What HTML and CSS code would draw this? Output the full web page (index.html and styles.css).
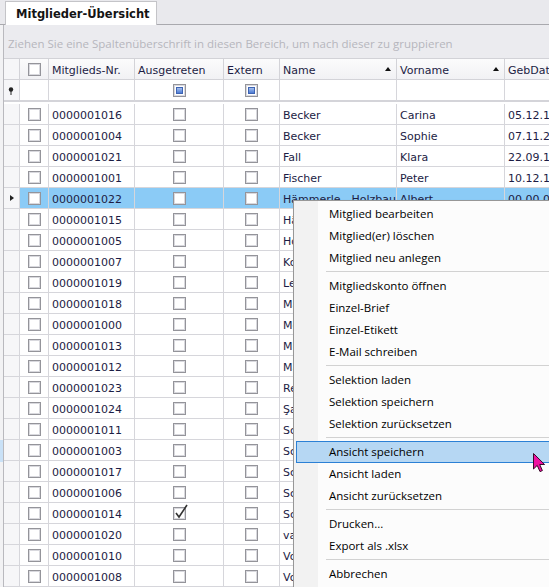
FILE: index.html
```html
<!DOCTYPE html>
<html lang="de">
<head>
    <meta charset="UTF-8">
    <title>Mitglieder-Übersicht</title>
    <link rel="stylesheet" href="styles.css">
</head>
<body>
    <div class="tabstrip">
        <div class="tab">Mitglieder-Übersicht</div>
    </div>
    <div class="content">
        <div class="behind">
            <div class="behind-sel"></div>
        </div>
        <div class="pane">
            <div class="group-panel">Ziehen Sie eine Spaltenüberschrift in diesen Bereich, um nach dieser zu gruppieren</div>
            <div class="grid">
                <div class="row head">
                    <div class="cell ind"></div>
                    <div class="cell box"><span class="cb"></span></div>
                    <div class="cell">Mitglieds-Nr.</div>
                    <div class="cell">Ausgetreten</div>
                    <div class="cell">Extern</div>
                    <div class="cell sort">Name<span class="arrow"></span></div>
                    <div class="cell sort">Vorname<span class="arrow"></span></div>
                    <div class="cell">GebDatum</div>
                </div>
                <div class="row filter">
                    <div class="cell ind">
                        <svg class="pin" width="6" height="8" viewBox="0 0 6 8"><circle cx="3" cy="2.5" r="2.2" fill="#222"/><rect x="2.5" y="4" width="1" height="4" fill="#222"/></svg>
                    </div>
                    <div class="cell box"></div>
                    <div class="cell"></div>
                    <div class="cell box"><span class="cb mixed"></span></div>
                    <div class="cell box"><span class="cb mixed"></span></div>
                    <div class="cell"></div>
                    <div class="cell"></div>
                    <div class="cell"></div>
                </div>
                <div class="gap"></div>

                <div class="row">
                    <div class="cell ind"></div><div class="cell box"><span class="cb"></span></div>
                    <div class="cell">0000001016</div><div class="cell box"><span class="cb"></span></div><div class="cell box"><span class="cb"></span></div>
                    <div class="cell">Becker</div><div class="cell">Carina</div><div class="cell">05.12.1987</div>
                </div>
                <div class="row">
                    <div class="cell ind"></div><div class="cell box"><span class="cb"></span></div>
                    <div class="cell">0000001004</div><div class="cell box"><span class="cb"></span></div><div class="cell box"><span class="cb"></span></div>
                    <div class="cell">Becker</div><div class="cell">Sophie</div><div class="cell">07.11.2001</div>
                </div>
                <div class="row">
                    <div class="cell ind"></div><div class="cell box"><span class="cb"></span></div>
                    <div class="cell">0000001021</div><div class="cell box"><span class="cb"></span></div><div class="cell box"><span class="cb"></span></div>
                    <div class="cell">Fall</div><div class="cell">Klara</div><div class="cell">22.09.1979</div>
                </div>
                <div class="row">
                    <div class="cell ind"></div><div class="cell box"><span class="cb"></span></div>
                    <div class="cell">0000001001</div><div class="cell box"><span class="cb"></span></div><div class="cell box"><span class="cb"></span></div>
                    <div class="cell">Fischer</div><div class="cell">Peter</div><div class="cell">10.12.1965</div>
                </div>
                <div class="row selected">
                    <div class="cell ind"><span class="current"></span></div><div class="cell box"><span class="cb"></span></div>
                    <div class="cell">0000001022</div><div class="cell box"><span class="cb"></span></div><div class="cell box"><span class="cb"></span></div>
                    <div class="cell">Hämmerle - Holzbau</div><div class="cell">Albert</div><div class="cell">00.00.0000</div>
                </div>
                <div class="row">
                    <div class="cell ind"></div><div class="cell box"><span class="cb"></span></div>
                    <div class="cell">0000001015</div><div class="cell box"><span class="cb"></span></div><div class="cell box"><span class="cb"></span></div>
                    <div class="cell">Hämmerle</div><div class="cell">Anna</div><div class="cell">14.03.1990</div>
                </div>
                <div class="row">
                    <div class="cell ind"></div><div class="cell box"><span class="cb"></span></div>
                    <div class="cell">0000001005</div><div class="cell box"><span class="cb"></span></div><div class="cell box"><span class="cb"></span></div>
                    <div class="cell">Hofer</div><div class="cell">Thomas</div><div class="cell">02.06.1972</div>
                </div>
                <div class="row">
                    <div class="cell ind"></div><div class="cell box"><span class="cb"></span></div>
                    <div class="cell">0000001007</div><div class="cell box"><span class="cb"></span></div><div class="cell box"><span class="cb"></span></div>
                    <div class="cell">Koch</div><div class="cell">Julia</div><div class="cell">19.01.1984</div>
                </div>
                <div class="row">
                    <div class="cell ind"></div><div class="cell box"><span class="cb"></span></div>
                    <div class="cell">0000001019</div><div class="cell box"><span class="cb"></span></div><div class="cell box"><span class="cb"></span></div>
                    <div class="cell">Lehmann</div><div class="cell">Martin</div><div class="cell">28.08.1969</div>
                </div>
                <div class="row">
                    <div class="cell ind"></div><div class="cell box"><span class="cb"></span></div>
                    <div class="cell">0000001018</div><div class="cell box"><span class="cb"></span></div><div class="cell box"><span class="cb"></span></div>
                    <div class="cell">Maier</div><div class="cell">Stefan</div><div class="cell">11.04.1977</div>
                </div>
                <div class="row">
                    <div class="cell ind"></div><div class="cell box"><span class="cb"></span></div>
                    <div class="cell">0000001000</div><div class="cell box"><span class="cb"></span></div><div class="cell box"><span class="cb"></span></div>
                    <div class="cell">Meier</div><div class="cell">Hans</div><div class="cell">03.02.1958</div>
                </div>
                <div class="row">
                    <div class="cell ind"></div><div class="cell box"><span class="cb"></span></div>
                    <div class="cell">0000001013</div><div class="cell box"><span class="cb"></span></div><div class="cell box"><span class="cb"></span></div>
                    <div class="cell">Müller</div><div class="cell">Lisa</div><div class="cell">25.10.1993</div>
                </div>
                <div class="row">
                    <div class="cell ind"></div><div class="cell box"><span class="cb"></span></div>
                    <div class="cell">0000001012</div><div class="cell box"><span class="cb"></span></div><div class="cell box"><span class="cb"></span></div>
                    <div class="cell">Mayer</div><div class="cell">Karl</div><div class="cell">09.07.1961</div>
                </div>
                <div class="row">
                    <div class="cell ind"></div><div class="cell box"><span class="cb"></span></div>
                    <div class="cell">0000001023</div><div class="cell box"><span class="cb"></span></div><div class="cell box"><span class="cb"></span></div>
                    <div class="cell">Reiter</div><div class="cell">Eva</div><div class="cell">16.05.1988</div>
                </div>
                <div class="row">
                    <div class="cell ind"></div><div class="cell box"><span class="cb"></span></div>
                    <div class="cell">0000001024</div><div class="cell box"><span class="cb"></span></div><div class="cell box"><span class="cb"></span></div>
                    <div class="cell">Şahin</div><div class="cell">Murat</div><div class="cell">30.11.1982</div>
                </div>
                <div class="row">
                    <div class="cell ind"></div><div class="cell box"><span class="cb"></span></div>
                    <div class="cell">0000001011</div><div class="cell box"><span class="cb"></span></div><div class="cell box"><span class="cb"></span></div>
                    <div class="cell">Schmid</div><div class="cell">Paul</div><div class="cell">21.03.1975</div>
                </div>
                <div class="row">
                    <div class="cell ind"></div><div class="cell box"><span class="cb"></span></div>
                    <div class="cell">0000001003</div><div class="cell box"><span class="cb"></span></div><div class="cell box"><span class="cb"></span></div>
                    <div class="cell">Schneider</div><div class="cell">Maria</div><div class="cell">08.09.1970</div>
                </div>
                <div class="row">
                    <div class="cell ind"></div><div class="cell box"><span class="cb"></span></div>
                    <div class="cell">0000001017</div><div class="cell box"><span class="cb"></span></div><div class="cell box"><span class="cb"></span></div>
                    <div class="cell">Schulz</div><div class="cell">Jonas</div><div class="cell">12.12.1995</div>
                </div>
                <div class="row">
                    <div class="cell ind"></div><div class="cell box"><span class="cb"></span></div>
                    <div class="cell">0000001006</div><div class="cell box"><span class="cb"></span></div><div class="cell box"><span class="cb"></span></div>
                    <div class="cell">Schwarz</div><div class="cell">Laura</div><div class="cell">04.06.1986</div>
                </div>
                <div class="row">
                    <div class="cell ind"></div><div class="cell box"><span class="cb"></span></div>
                    <div class="cell">0000001014</div>
                    <div class="cell box"><span class="cb checked"><svg width="16" height="16" viewBox="0 0 16 16"><path d="M3 9 L6 13 L14 1" fill="none" stroke="#333" stroke-width="1.6"/></svg></span></div>
                    <div class="cell box"><span class="cb"></span></div>
                    <div class="cell">Schäfer</div><div class="cell">Klaus</div><div class="cell">17.02.1954</div>
                </div>
                <div class="row">
                    <div class="cell ind"></div><div class="cell box"><span class="cb"></span></div>
                    <div class="cell">0000001020</div><div class="cell box"><span class="cb"></span></div><div class="cell box"><span class="cb"></span></div>
                    <div class="cell">van Dijk</div><div class="cell">Sanne</div><div class="cell">23.08.1991</div>
                </div>
                <div class="row">
                    <div class="cell ind"></div><div class="cell box"><span class="cb"></span></div>
                    <div class="cell">0000001010</div><div class="cell box"><span class="cb"></span></div><div class="cell box"><span class="cb"></span></div>
                    <div class="cell">Vogel</div><div class="cell">Lukas</div><div class="cell">06.04.1980</div>
                </div>
                <div class="row">
                    <div class="cell ind"></div><div class="cell box"><span class="cb"></span></div>
                    <div class="cell">0000001008</div><div class="cell box"><span class="cb"></span></div><div class="cell box"><span class="cb"></span></div>
                    <div class="cell">Vollmer</div><div class="cell">Petra</div><div class="cell">15.01.1968</div>
                </div>
            </div>
        </div>
    </div>

    <div class="menu">
        <div class="menu-item">Mitglied bearbeiten</div>
        <div class="menu-item">Mitglied(er) löschen</div>
        <div class="menu-item">Mitglied neu anlegen</div>
        <div class="menu-sep"></div>
        <div class="menu-item">Mitgliedskonto öffnen</div>
        <div class="menu-item">Einzel-Brief</div>
        <div class="menu-item">Einzel-Etikett</div>
        <div class="menu-item">E-Mail schreiben</div>
        <div class="menu-sep"></div>
        <div class="menu-item">Selektion laden</div>
        <div class="menu-item">Selektion speichern</div>
        <div class="menu-item">Selektion zurücksetzen</div>
        <div class="menu-sep"></div>
        <div class="menu-item active">Ansicht speichern</div>
        <div class="menu-item">Ansicht laden</div>
        <div class="menu-item">Ansicht zurücksetzen</div>
        <div class="menu-sep"></div>
        <div class="menu-item">Drucken...</div>
        <div class="menu-item">Export als .xlsx</div>
        <div class="menu-sep"></div>
        <div class="menu-item">Abbrechen</div>
    </div>

    <svg class="cursor" width="14" height="21" viewBox="0 0 14 21">
        <path d="M0.5 0.5 L0.5 16 L4.2 12.4 L7 18.6 L9.4 17.6 L6.7 11.5 L11.6 11.5 Z" fill="#ee10a0" stroke="#3a0a2a" stroke-width="1"/>
    </svg>
</body>
</html>
```

FILE: styles.css
```css
body {
    margin: 0;
    width: 549px;
    height: 587px;
    overflow: hidden;
    position: relative;
    background: #e9e9ed;
    font-family: "DejaVu Sans", sans-serif;
    font-size: 11px;
    color: #1c1c44;
}
.tabstrip {
    height: 24px;
    border-bottom: 1px solid #a9a9ae;
    padding-left: 5px;
    display: flex;
    align-items: flex-end;
}
.tab {
    width: 152px;
    height: 24px;
    margin-bottom: -1px;
    box-sizing: border-box;
    padding: 1px 0 0 10px;
    background: #fff;
    border: 1px solid #c4c4c8;
    border-bottom: none;
    font-weight: bold;
    font-size: 11.5px;
    line-height: 22px;
    color: #141414;
}
.content {
    display: flex;
    height: 562px;
}
.behind {
    width: 3px;
    background: #f2f2f4;
}
.behind-sel {
    margin-top: 415px;
    height: 22px;
    background: #c9e1f7;
}
.pane {
    flex: 1;
    border-left: 1px solid #b9b9be;
    background: #fff;
    overflow: hidden;
}
.group-panel {
    height: 34px;
    box-sizing: border-box;
    padding: 9px 0 0 4px;
    line-height: 20px;
    background: #ebebef;
    border-bottom: 1px solid #d2d2d7;
    font-family: "Open Sans", sans-serif;
    font-size: 11.5px;
    color: #b6b6bd;
    white-space: nowrap;
}
.row {
    display: grid;
    grid-template-columns: 16px 29px 86px 89px 56px 117px 108px 100px;
    height: 21px;
}
.cell {
    box-sizing: border-box;
    border-right: 1px solid #d6d6db;
    border-bottom: 1px solid #d6d6db;
    padding: 2px 3px 0;
    line-height: 19px;
    white-space: nowrap;
    overflow: hidden;
}
.head .cell {
    background: linear-gradient(#fbfbfc, #f1f1f4);
    border-color: #d3d3d8;
}
.filter {
    height: 22px;
}
.filter .cell {
    border-bottom-width: 2px;
    border-bottom-color: #d4d4d9;
}
.gap {
    height: 2px;
}
.cell.ind {
    padding: 0;
    background: #f6f6f8;
    display: flex;
    align-items: center;
    justify-content: center;
}
.cell.box {
    padding: 0;
    display: flex;
    align-items: center;
    justify-content: center;
}
.sort {
    display: flex;
    align-items: center;
    justify-content: space-between;
    padding-right: 5px;
}
.arrow {
    width: 0;
    height: 0;
    border-left: 3.5px solid transparent;
    border-right: 3.5px solid transparent;
    border-bottom: 4px solid #111;
    margin-top: -2px;
}
.pin {
    display: block;
    margin: 1px 2px 0 0;
}
.current {
    width: 0;
    height: 0;
    border-top: 3.5px solid transparent;
    border-bottom: 3.5px solid transparent;
    border-left: 4px solid #222;
    margin-left: 1px;
}
.selected .cell {
    background: #8bcbf6;
}
.selected .cell.ind {
    background: #f6f6f8;
}
.cb {
    position: relative;
    display: inline-block;
    width: 13px;
    height: 13px;
    box-sizing: border-box;
    border: 1px solid #94949a;
    background: #fff;
    box-shadow: inset 0 0 0 1px #d9d9de;
}
.cb.mixed::after {
    content: "";
    position: absolute;
    left: 2px;
    top: 2px;
    width: 7px;
    height: 7px;
    box-sizing: border-box;
    border: 1px solid #3d63b3;
    background: linear-gradient(#a5c0ee, #4d7bd3);
}
.cb.checked svg {
    position: absolute;
    left: -1px;
    top: -4px;
}
.menu {
    position: absolute;
    left: 293px;
    top: 200px;
    width: 280px;
    padding: 2px 0;
    background: linear-gradient(to right, #f2f2f2 24px, #fcfcfc 24px);
    border: 1px solid #979797;
    box-shadow: 2px 2px 3px rgba(0, 0, 0, 0.2);
    font-family: "Open Sans", sans-serif;
    font-size: 11.5px;
    color: #000;
}
.menu-item {
    height: 22px;
    box-sizing: border-box;
    margin: 0 2px;
    padding-left: 32px;
    border: 1px solid transparent;
    line-height: 20px;
    white-space: nowrap;
}
.menu-item.active {
    background: #b6d7f3;
    border-color: #2b80d5;
}
.menu-sep {
    height: 1px;
    margin: 2px 0 3px 32px;
    background: #d2d2d2;
}
.cursor {
    position: absolute;
    left: 533px;
    top: 453px;
}
```
